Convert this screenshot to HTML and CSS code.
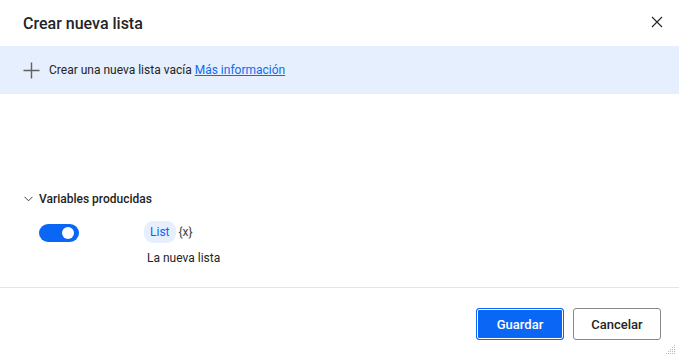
FILE: index.html
```html
<!DOCTYPE html>
<html lang="es">
<head>
    <meta charset="UTF-8">
    <title>Crear nueva lista</title>
    <link rel="stylesheet" href="styles.css">
</head>
<body>
    <div class="dialog">
        <!-- Cabecera -->
        <div class="header">
            <h1 class="title">Crear nueva lista</h1>
            <button class="close-btn" aria-label="Cerrar">
                <svg width="12" height="12" viewBox="0 0 12 12"><path d="M1 1 L11 11 M11 1 L1 11" stroke="#242424" stroke-width="1.1" fill="none"/></svg>
            </button>
        </div>

        <!-- Descripcion -->
        <div class="banner">
            <svg class="plus" width="17" height="17" viewBox="0 0 17 17"><path d="M8.5 0.5 V16.5 M0.5 8.5 H16.5" stroke="#616161" stroke-width="1.4" fill="none"/></svg>
            <span>Crear una nueva lista vacía <a href="#" class="link">Más información</a></span>
        </div>

        <div class="content">
            <div class="section-head">
                <svg class="chevron" width="9" height="6" viewBox="0 0 9 6"><path d="M0.5 0.8 L4.5 4.8 L8.5 0.8" stroke="#424242" stroke-width="1" fill="none"/></svg>
                <span>Variables producidas</span>
            </div>
            <div class="var-row">
                <div class="toggle"><span class="knob"></span></div>
                <div class="var-info">
                    <div class="var-name"><span class="pill">List</span><span class="braces">{x}</span></div>
                    <div class="var-desc">La nueva lista</div>
                </div>
            </div>
        </div>

        <!-- Botones -->
        <div class="footer">
            <button class="btn primary">Guardar</button>
            <button class="btn">Cancelar</button>
        </div>
        <svg class="grip" width="10" height="10" viewBox="0 0 10 10">
            <g fill="#b8b8b8">
                <rect x="8" y="0" width="1" height="1"/>
                <rect x="6" y="2" width="1" height="1"/><rect x="8" y="2" width="1" height="1"/>
                <rect x="4" y="4" width="1" height="1"/><rect x="6" y="4" width="1" height="1"/><rect x="8" y="4" width="1" height="1"/>
                <rect x="2" y="6" width="1" height="1"/><rect x="4" y="6" width="1" height="1"/><rect x="6" y="6" width="1" height="1"/><rect x="8" y="6" width="1" height="1"/>
                <rect x="0" y="8" width="1" height="1"/><rect x="2" y="8" width="1" height="1"/><rect x="4" y="8" width="1" height="1"/><rect x="6" y="8" width="1" height="1"/><rect x="8" y="8" width="1" height="1"/>
            </g>
        </svg>
    </div>
</body>
</html>
```

FILE: styles.css
```css
body {
    margin: 0;
    font-family: Roboto, 'Noto Sans', sans-serif;
    color: #242424;
    background: #ffffff;
}
.dialog {
    position: relative;
    width: 679px;
    height: 358px;
    display: flex;
    flex-direction: column;
}
.header {
    height: 46px;
    display: flex;
    align-items: center;
    justify-content: space-between;
    padding: 0 16px 0 23px;
}
.title {
    margin: 0;
    font-size: 16px;
    font-weight: 500;
    color: #242424;
}
.close-btn {
    border: none;
    background: none;
    padding: 0;
    width: 12px;
    height: 12px;
    display: flex;
    margin-top: -3px;
}
.banner {
    height: 48px;
    background: #e6effd;
    display: flex;
    align-items: center;
    padding-left: 23px;
    font-size: 12px;
    color: #242424;
}
.plus {
    margin-right: 9px;
}
.link {
    color: #0f6cf0;
    text-decoration: underline;
}
.content {
    flex: 1;
    padding-top: 98px;
    border-bottom: 1px solid #e4e4e4;
}
.section-head {
    display: flex;
    align-items: center;
    padding-left: 24px;
    font-size: 12px;
    font-weight: 500;
    color: #242424;
}
.chevron {
    margin-right: 6px;
}
.var-row {
    display: flex;
    padding-left: 39px;
    margin-top: 15px;
}
.toggle {
    width: 40px;
    height: 18px;
    margin-top: 3px;
    border-radius: 10px;
    background: #0a66f5;
    position: relative;
}
.knob {
    position: absolute;
    right: 5px;
    top: 3px;
    width: 12px;
    height: 12px;
    border-radius: 50%;
    background: #ffffff;
}
.var-info {
    margin-left: 65px;
}
.var-name {
    display: flex;
    align-items: center;
    font-size: 12px;
}
.pill {
    background: #e6effd;
    color: #0a66f5;
    border-radius: 9px;
    padding: 3px 6px;
    line-height: 16px;
}
.braces {
    margin-left: 3px;
    color: #424242;
}
.var-desc {
    font-size: 12px;
    margin-top: 8px;
    margin-left: 3px;
}
.footer {
    height: 70px;
    display: flex;
    justify-content: flex-end;
    align-items: flex-start;
    gap: 9px;
    padding: 20px 18px 0 0;
    box-sizing: border-box;
}
.btn {
    width: 88px;
    height: 32px;
    border: 1px solid #8a8a8a;
    border-radius: 3px;
    background: #ffffff;
    color: #242424;
    font-family: inherit;
    font-size: 13px;
    font-weight: 500;
}
.primary {
    background: #0a66f5;
    border-color: #0a66f5;
    color: #ffffff;
    box-shadow: inset 0 0 0 1px #ffffff;
}
.grip {
    position: absolute;
    right: 3px;
    bottom: 3px;
}
```
